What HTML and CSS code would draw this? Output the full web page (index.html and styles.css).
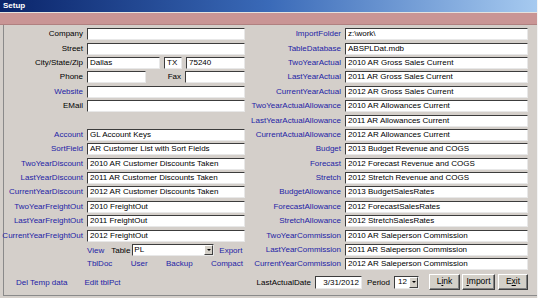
FILE: index.html
```html
<!DOCTYPE html>
<html>
<head>
<meta charset="utf-8">
<link rel="stylesheet" href="styles.css">
</head>
<body>
<div class="window">
  <div class="titlebar">Setup</div>
  <div class="band"></div>
  <div class="content">
    <div class="form">
      <div class="lbl">Company</div><div class="fld"></div>
      <div class="lbl blue">ImportFolder</div><div class="fld">z:\work\</div>

      <div class="lbl">Street</div><div class="fld"></div>
      <div class="lbl blue">TableDatabase</div><div class="fld">ABSPLDat.mdb</div>

      <div class="lbl">City/State/Zip</div>
      <div class="split">
        <div class="fld w-city">Dallas</div><div class="fld w-state">TX</div><div class="fld grow">75240</div>
      </div>
      <div class="lbl blue">TwoYearActual</div><div class="fld">2010 AR Gross Sales Current</div>

      <div class="lbl">Phone</div>
      <div class="split">
        <div class="fld w-phone"></div><div class="lbl grow">Fax</div><div class="fld w-fax"></div>
      </div>
      <div class="lbl blue">LastYearActual</div><div class="fld">2011 AR Gross Sales Current</div>

      <div class="lbl blue">Website</div><div class="fld"></div>
      <div class="lbl blue">CurrentYearActual</div><div class="fld">2012 AR Gross Sales Current</div>

      <div class="lbl">EMail</div><div class="fld"></div>
      <div class="lbl blue">TwoYearActualAllowance</div><div class="fld">2010 AR Allowances Current</div>

      <div></div><div></div>
      <div class="lbl blue">LastYearActualAllowance</div><div class="fld">2011 AR Allowances Current</div>

      <div class="lbl blue">Account</div><div class="fld">GL Account Keys</div>
      <div class="lbl blue">CurrentActualAllowance</div><div class="fld">2012 AR Allowances Current</div>

      <div class="lbl blue">SortField</div><div class="fld">AR Customer List with Sort Fields</div>
      <div class="lbl blue">Budget</div><div class="fld">2013 Budget Revenue and COGS</div>

      <div class="lbl blue">TwoYearDiscount</div><div class="fld">2010 AR Customer Discounts Taken</div>
      <div class="lbl blue">Forecast</div><div class="fld">2012 Forecast Revenue and COGS</div>

      <div class="lbl blue">LastYearDiscount</div><div class="fld">2011 AR Customer Discounts Taken</div>
      <div class="lbl blue">Stretch</div><div class="fld">2012 Stretch Revenue and COGS</div>

      <div class="lbl blue">CurrentYearDiscount</div><div class="fld">2012 AR Customer Discounts Taken</div>
      <div class="lbl blue">BudgetAllowance</div><div class="fld">2013 BudgetSalesRates</div>

      <div class="lbl blue">TwoYearFreightOut</div><div class="fld">2010 FreightOut</div>
      <div class="lbl blue">ForecastAllowance</div><div class="fld">2012 ForecastSalesRates</div>

      <div class="lbl blue">LastYearFreightOut</div><div class="fld">2011 FreightOut</div>
      <div class="lbl blue">StretchAllowance</div><div class="fld">2012 StretchSalesRates</div>

      <div class="lbl blue">CurrentYearFreightOut</div><div class="fld">2012 FreightOut</div>
      <div class="lbl blue">TwoYearCommission</div><div class="fld">2010 AR Saleperson Commission</div>

      <div></div>
      <div class="viewrow">
        <span class="blue">View</span>
        <span class="tbl">Table</span>
        <div class="combo table-combo"><span class="ctext">PL</span><span class="dd"></span></div>
        <span class="blue">Export</span>
      </div>
      <div class="lbl blue">LastYearCommission</div><div class="fld">2011 AR Saleperson Commission</div>

      <div></div>
      <div class="links">
        <span class="blue">TblDoc</span><span class="blue">User</span><span class="blue">Backup</span><span class="blue">Compact</span>
      </div>
      <div class="lbl blue">CurrentYearCommission</div><div class="fld">2012 AR Saleperson Commission</div>
    </div>

    <div class="bottom">
      <div class="left-links">
        <span class="blue">Del Temp data</span>
        <span class="blue">Edit tblPct</span>
      </div>
      <div class="controls">
        <span class="plain">LastActualDate</span>
        <div class="fld date">3/31/2012</div>
        <span class="plain period">Period</span>
        <div class="combo period-combo"><span class="ctext right">12</span><span class="dd"></span></div>
        <div class="buttons">
          <div class="btn b-link">L<u>i</u>nk</div>
          <div class="btn b-import"><u>I</u>mport</div>
          <div class="btn b-exit">E<u>x</u>it</div>
        </div>
      </div>
    </div>
  </div>
</div>
</body>
</html>
```

FILE: styles.css
```css
* { box-sizing: border-box; }
html, body {
  margin: 0;
  padding: 0;
  background: #d4cfca;
}
body {
  font-family: "Liberation Sans", Arial, sans-serif;
  font-size: 8px;
  color: #000;
}
.window {
  width: 538px;
  height: 298px;
  background: #d4cfca;
  overflow: hidden;
  border-right: 1px solid #f4f4f4;
}
.titlebar {
  height: 12px;
  line-height: 12px;
  padding-left: 3px;
  color: #fff;
  font-weight: bold;
  font-size: 8px;
  background: linear-gradient(to right, #0a246a 0%, #3a6ab8 50%, #a6caf0 100%);
}
.band {
  height: 13px;
  background: #c99595;
  border-top: 1px solid #e6e2de;
  border-bottom: 1px solid #b08080;
}
.content {
  margin-left: 3px;
  height: 271px;
  border-left: 1px solid #8a8a8a;
  border-bottom: 1px solid #8a8a8a;
  padding-top: 2px;
}
.form {
  display: grid;
  grid-template-columns: 79px 158px 92px 183px;
  column-gap: 4px;
  grid-auto-rows: 14.4px;
  align-items: center;
}
.lbl {
  white-space: nowrap;
  display: flex;
  justify-content: flex-end;
  line-height: 12px;
}
.blue { color: #2323a6; }
.fld {
  height: 12px;
  background: #fff;
  border-top: 1px solid #3c3c3c;
  border-left: 1px solid #3c3c3c;
  border-right: 1px solid #e8e8e8;
  border-bottom: 1px solid #e8e8e8;
  padding-left: 2px;
  line-height: 10px;
  white-space: nowrap;
  overflow: hidden;
}
.split {
  display: flex;
  gap: 4px;
  align-items: center;
}
.w-city { width: 73px; }
.w-state { width: 18px; }
.w-phone { width: 59px; }
.w-fax { width: 60px; }
.grow { flex: 1; }
.viewrow {
  display: flex;
  align-items: center;
  white-space: nowrap;
}
.tbl { margin-left: 7px; }
.combo {
  height: 12px;
  background: #fff;
  border-top: 1px solid #3c3c3c;
  border-left: 1px solid #3c3c3c;
  border-right: 1px solid #e8e8e8;
  border-bottom: 1px solid #e8e8e8;
  display: flex;
  align-items: stretch;
}
.table-combo {
  width: 82px;
  margin-left: 2px;
  margin-right: 5px;
}
.ctext {
  flex: 1;
  padding-left: 1px;
  line-height: 10px;
}
.ctext.right {
  text-align: right;
  padding-right: 2px;
}
.dd {
  width: 9px;
  background: #d4d0c8;
  border-top: 1px solid #fff;
  border-left: 1px solid #fff;
  border-right: 1px solid #404040;
  border-bottom: 1px solid #404040;
  position: relative;
}
.dd::after {
  content: "";
  position: absolute;
  left: 2px;
  top: 3px;
  border-left: 2px solid transparent;
  border-right: 2px solid transparent;
  border-top: 2px solid #000;
}
.links {
  display: flex;
  justify-content: space-between;
  padding-right: 2px;
  line-height: 12px;
}
.bottom {
  display: flex;
  align-items: center;
  height: 17px;
  margin-top: 2px;
}
.left-links {
  display: flex;
  gap: 17px;
  padding-left: 12px;
}
.controls {
  margin-left: auto;
  margin-right: 9px;
  display: flex;
  align-items: center;
}
.date {
  width: 47px;
  height: 13px;
  margin-left: 4px;
  text-align: right;
  padding-right: 2px;
  line-height: 11px;
}
.period { margin-left: 5px; }
.period-combo {
  width: 25px;
  height: 13px;
  margin-left: 4px;
}
.buttons {
  display: flex;
  margin-left: 10px;
  gap: 2px;
}
.btn {
  height: 16px;
  line-height: 13px;
  text-align: center;
  background: #d4d0c8;
  border-top: 1px solid #fff;
  border-left: 1px solid #fff;
  border-right: 1px solid #404040;
  border-bottom: 1px solid #404040;
  box-shadow: inset -1px -1px 0 #808080;
  font-size: 8.5px;
}
.b-link { width: 31px; }
.b-import { width: 33px; }
.b-exit { width: 30px; margin-left: 1px; }
```
